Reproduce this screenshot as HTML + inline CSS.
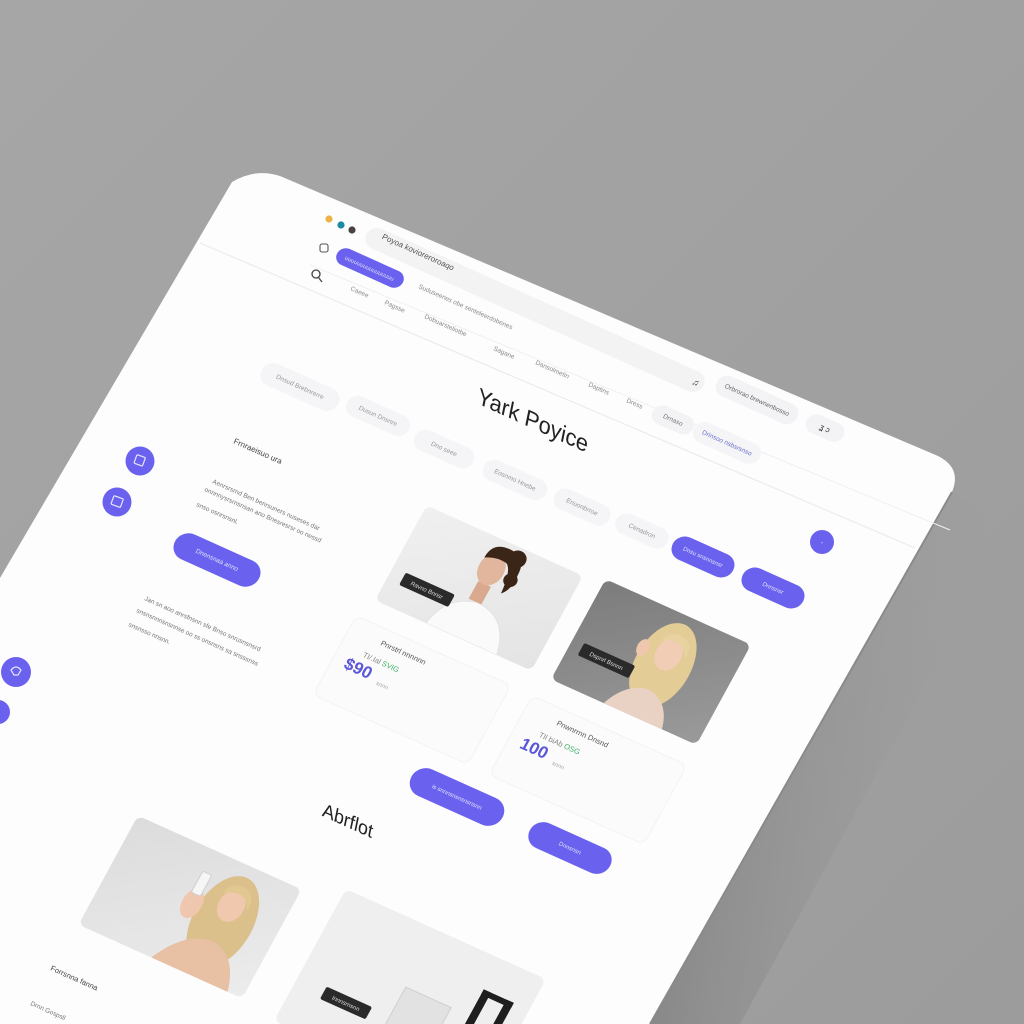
<!DOCTYPE html>
<html><head><meta charset="utf-8"><style>
html,body{margin:0;padding:0;width:1024px;height:1024px;overflow:hidden;background:#a3a3a3}
svg{display:block}
text{font-family:"Liberation Sans",sans-serif}
</style></head><body>
<svg width="1024" height="1024" viewBox="0 0 1024 1024" xmlns="http://www.w3.org/2000/svg" style="position:absolute;left:0;top:0">
<defs>
<linearGradient id="bg" x1="0" y1="0" x2="1" y2="1">
<stop offset="0" stop-color="#a6a6a6"/><stop offset="1" stop-color="#9c9c9c"/>
</linearGradient>
<linearGradient id="sh" x1="0" y1="0" x2="1" y2="0.2">
<stop offset="0" stop-color="#747474" stop-opacity="0.8"/><stop offset="1" stop-color="#a0a0a0" stop-opacity="0"/>
</linearGradient>
<linearGradient id="gw" x1="0" y1="0" x2="1" y2="1">
<stop offset="0" stop-color="#7c7c7c"/><stop offset="1" stop-color="#9a9a9a"/>
</linearGradient>
<linearGradient id="gm" x1="0" y1="0" x2="1" y2="1">
<stop offset="0" stop-color="#f0f0f0"/><stop offset="1" stop-color="#e4e4e4"/>
</linearGradient>
<linearGradient id="g3" x1="0" y1="0" x2="1" y2="1">
<stop offset="0" stop-color="#dcdcdc"/><stop offset="1" stop-color="#ececec"/>
</linearGradient>
</defs>
<rect width="1024" height="1024" fill="url(#bg)"/>
<!-- shadow right of card -->
<polygon points="952,492 1010,530 740,1024 650,1024" fill="url(#sh)"/>
<!-- card -->
<path d="M232,182 Q255,168 280,176 L938,456 Q962,468 952,492 L650,1024 L0,1024 L0,578 Z" fill="#fdfdfd"/>
<path d="M952,492 L650,1024" stroke="#8a8a8a" stroke-width="2"/>
<!-- separator lines -->
<line x1="200" y1="243" x2="915" y2="548" stroke="#ececec" stroke-width="1.2"/>
<line x1="310" y1="265" x2="950" y2="530" stroke="#f0f0f0" stroke-width="1"/>

<circle cx="329" cy="219" r="3.6" fill="#eeb248"/>
<circle cx="341" cy="225" r="3.6" fill="#1e8aa2"/>
<circle cx="352" cy="230" r="3.6" fill="#4a4242"/>

<g transform="translate(535 310) matrix(0.91 0.41 -0.48 0.88 0 0)">
<rect x="-185" y="-11" width="370" height="22" rx="11" fill="#f3f3f4"/>
<text x="-170" y="-2" font-size="8" fill="#555">Poyoa kovioreroroaqo</text>
<text x="180" y="3" font-size="9" fill="#333" text-anchor="end">♫</text>
</g>
<g transform="translate(370 268) matrix(0.91 0.41 -0.48 0.88 0 0)">
<rect x="-36" y="-9" width="72" height="18" rx="9" fill="#6a62ee"/>
<text x="-27" y="2.5" font-size="6" fill="#dcdcff">uuuuuuuuuuuuuuuu</text>
</g>
<g transform="translate(324 248)" fill="none" stroke="#555" stroke-width="1.1">
<rect x="-4" y="-4" width="8" height="8" rx="2"/>
</g>
<g transform="translate(316 275)" fill="none" stroke="#444" stroke-width="1.3">
<circle cx="0" cy="-1" r="4"/><line x1="2.5" y1="2.5" x2="6" y2="7"/>
</g>

<g font-size="6.5" fill="#8a8a8a">
<text transform="translate(350 290) rotate(24)">Caeee</text>
<text transform="translate(384 304) rotate(24)">Pagsse</text>
<text transform="translate(424 318) rotate(24)">Dobuarsteliotbe</text>
<text transform="translate(418 288) rotate(24)">Suduseenes obe senteleerdobenes</text>
<text transform="translate(493 350) rotate(24)">Sagane</text>
<text transform="translate(535 364) rotate(24)">Dansolmetin</text>
<text transform="translate(588 386) rotate(24)">Daptins</text>
<text transform="translate(626 402) rotate(24)">Dress</text>
</g>

<g font-size="6.5" fill="#999">
<g transform="translate(300 387) matrix(0.91 0.41 -0.48 0.88 0 0)"><rect x="-42" y="-12" width="84" height="24" rx="12" fill="#f5f5f7"/><text x="0" y="2" text-anchor="middle">Dnsud Brebnrerre</text></g>
<g transform="translate(378 416) matrix(0.91 0.41 -0.48 0.88 0 0)"><rect x="-34" y="-11" width="68" height="22" rx="11" fill="#f5f5f7"/><text x="0" y="2" text-anchor="middle">Dusun Dnsnre</text></g>
<g transform="translate(444 449) matrix(0.91 0.41 -0.48 0.88 0 0)"><rect x="-32" y="-11" width="64" height="22" rx="11" fill="#f5f5f7"/><text x="0" y="2" text-anchor="middle">Dno   seee</text></g>
<g transform="translate(515 480) matrix(0.91 0.41 -0.48 0.88 0 0)"><rect x="-34" y="-11" width="68" height="22" rx="11" fill="#f5f5f7"/><text x="0" y="2" text-anchor="middle">Eosnmo Hnebe</text></g>
<g transform="translate(582 507) matrix(0.91 0.41 -0.48 0.88 0 0)"><rect x="-30" y="-11" width="60" height="22" rx="11" fill="#f5f5f7"/><text x="0" y="2" text-anchor="middle">Enuonbrroe</text></g>
<g transform="translate(642 531) matrix(0.91 0.41 -0.48 0.88 0 0)"><rect x="-28" y="-11" width="56" height="22" rx="11" fill="#f5f5f7"/><text x="0" y="2" text-anchor="middle">Cenadron</text></g>
<g transform="translate(673 420) matrix(0.91 0.41 -0.48 0.88 0 0)"><rect x="-22" y="-10" width="44" height="20" rx="10" fill="#f3f3f5"/><text x="0" y="2" text-anchor="middle" fill="#777">Drnaso</text></g>
<g transform="translate(757 400) matrix(0.91 0.41 -0.48 0.88 0 0)"><rect x="-44" y="-11" width="88" height="22" rx="11" fill="#f3f3f5"/><text x="0" y="2" text-anchor="middle" fill="#666">Orbrorao brewnenbosso</text></g>
<g transform="translate(727 443) matrix(0.91 0.41 -0.48 0.88 0 0)"><rect x="-36" y="-11" width="72" height="22" rx="11" fill="#f5f5f8"/><text x="0" y="2" text-anchor="middle" fill="#6a70c8">Drinsoo nsbsrsnso</text></g>
<g transform="translate(825 428) matrix(0.91 0.41 -0.48 0.88 0 0)"><rect x="-20" y="-10" width="40" height="20" rx="10" fill="#f3f3f5"/><text x="0" y="3" text-anchor="middle" fill="#333" font-size="8">ʓ   ɔ</text></g>
</g>

<text transform="translate(533 420) matrix(0.91 0.41 -0.2 0.98 0 0)" font-size="23" fill="#222" text-anchor="middle" dy="8">Yark Poyice</text>

<g fill="#6a62ee">
<circle cx="140" cy="461" r="14.5"/><circle cx="117" cy="502" r="14.5"/>
<circle cx="16" cy="672" r="15"/><circle cx="-2" cy="712" r="12"/>
</g>
<g fill="none" stroke="#e6e6ff" stroke-width="1.2">
<rect x="135" y="456" width="9" height="9" rx="1" transform="rotate(20 140 461)"/>
<rect x="112" y="497" width="10" height="9" rx="1" transform="rotate(20 117 502)"/>
<path d="M11,670 q5,-6 10,0 l-3,5 h-4 z"/>
</g>

<text transform="translate(233 443) rotate(24)" font-size="8" fill="#444">Frnraeisuo ura</text>
<g font-size="6.5" fill="#777">
<text transform="translate(212 483) rotate(24)">Aenrsrsrnd Ben benrsuners nuseses dar</text>
<text transform="translate(204 491) rotate(24)">onnnnysrsrnsnsan ano Bnesresrsr oo nessd</text>
<text transform="translate(196 506) rotate(24)">snso osnrsnsnl.</text>
<text transform="translate(144 600) rotate(24)">Jan sn aoo anrsfnsnn sfe Bnso snrusnsnsrd</text>
<text transform="translate(136 612) rotate(24)">snsnsnnnsnsnnse oo ss onsnsns sa snsssnss</text>
<text transform="translate(128 626) rotate(24)">snsnsso nnsnn.</text>
</g>
<g transform="translate(217 560) matrix(0.91 0.41 -0.48 0.88 0 0)">
<rect x="-46" y="-14" width="92" height="28" rx="14" fill="#6a62ee"/>
<text x="0" y="2" font-size="6.5" fill="#e0e0ff" text-anchor="middle">Dnensnaa anno</text>
</g>

<g transform="translate(412 690) matrix(0.91 0.41 -0.48 0.88 0 0)">
<rect x="-85" y="-45" width="170" height="90" rx="8" fill="#fbfbfb" stroke="#f3f3f3"/>
<text x="-50" y="-28" font-size="7.5" fill="#555">Pnrstrl nnnnnn</text>
<text x="-60" y="-10" font-size="7.5" fill="#888">TI/.Ial <tspan fill="#3fb06a">SVIG</tspan></text>
<text x="-72" y="8" font-size="17" font-weight="bold" fill="#5a56d8">$90</text>
<text x="-35" y="10" font-size="6" fill="#aaa">snnn</text>
</g>
<g transform="translate(588 770) matrix(0.91 0.41 -0.48 0.88 0 0)">
<rect x="-85" y="-45" width="170" height="90" rx="8" fill="#fbfbfb" stroke="#f3f3f3"/>
<text x="-50" y="-28" font-size="7.5" fill="#555">Pnwnrrnn Dnsnd</text>
<text x="-60" y="-10" font-size="7.5" fill="#888">TIl biAb <tspan fill="#3fb06a">OSG</tspan></text>
<text x="-72" y="8" font-size="17" font-weight="bold" fill="#5a56d8">100</text>
<text x="-35" y="10" font-size="6" fill="#aaa">snnn</text>
</g>

<!-- man photo -->
<g transform="translate(479 588) matrix(0.91 0.41 -0.48 0.88 0 0)">
<clipPath id="c1"><rect x="-86" y="-54" width="172" height="108" rx="7"/></clipPath>
<g clip-path="url(#c1)">
<rect x="-86" y="-54" width="172" height="108" fill="url(#gm)"/>
<path d="M-30,54 Q-25,20 5,14 Q40,14 48,54 Z" fill="#fafafa" stroke="#e2e2e2"/>
<rect x="-4" y="-6" width="14" height="20" fill="#d8a98e"/>
<ellipse cx="2" cy="-22" rx="13" ry="17" fill="#e2b69c"/>
<path d="M-10,-30 Q-10,-48 8,-48 Q28,-48 28,-28 Q30,-12 22,-4 Q20,-30 12,-34 Q0,-36 -10,-30 Z" fill="#3b2516"/>
<circle cx="24" cy="-20" r="7" fill="#3b2516"/>
<circle cx="20" cy="-42" r="9" fill="#3b2516"/>
</g>
<rect x="-72" y="16" width="54" height="14" rx="2" fill="#2a2a2a"/>
<text x="-45" y="25.5" font-size="6" fill="#ddd" text-anchor="middle">Ravno Bnnsr</text>
</g>

<!-- woman photo -->
<g transform="translate(651 662) matrix(0.91 0.41 -0.48 0.88 0 0)">
<clipPath id="c2"><rect x="-80" y="-57" width="160" height="114" rx="7"/></clipPath>
<g clip-path="url(#c2)">
<rect x="-80" y="-57" width="160" height="114" fill="url(#gw)"/>
<ellipse cx="12" cy="-2" rx="28" ry="46" fill="#e3cc96"/>
<path d="M-22,57 Q-12,30 10,26 Q35,28 42,57 Z" fill="#e9d2c4"/>
<ellipse cx="12" cy="-14" rx="13" ry="17" fill="#f2cdb6"/>
<path d="M-2,-22 Q2,-38 16,-36 Q30,-34 28,-18 Q22,-28 12,-28 Q2,-28 -2,-22 Z" fill="#e8d3a0"/>
<ellipse cx="-14" cy="-10" rx="6" ry="9" fill="#efc7ae"/>
</g>
<rect x="-68" y="10" width="56" height="14" rx="2" fill="#2a2a2a"/>
<text x="-40" y="19.5" font-size="6" fill="#ddd" text-anchor="middle">Dspnrl Bsnnn</text>
</g>

<g font-size="6" fill="#e0e0ff" text-anchor="middle">
<g transform="translate(703 557) matrix(0.91 0.41 -0.48 0.88 0 0)"><rect x="-33" y="-12.5" width="66" height="25" rx="12.5" fill="#6a62ee"/><text y="2">Dnsu snsnnsnsr</text></g>
<g transform="translate(773 588) matrix(0.91 0.41 -0.48 0.88 0 0)"><rect x="-33" y="-12.5" width="66" height="25" rx="12.5" fill="#6a62ee"/><text y="2">Dnnsnsr</text></g>
<circle cx="822" cy="542" r="12" fill="#6a62ee"/><text x="822" y="545" font-size="7">-</text>
<g transform="translate(457 797) matrix(0.91 0.41 -0.48 0.88 0 0)"><rect x="-50" y="-15" width="100" height="30" rx="15" fill="#6a62ee"/><text y="2">is  snnnsnsnsnsnsnn</text></g>
<g transform="translate(570 848) matrix(0.91 0.41 -0.48 0.88 0 0)"><rect x="-44" y="-14" width="88" height="28" rx="14" fill="#6a62ee"/><text y="2">Dnnsnsn</text></g>
</g>

<text transform="translate(348 820) matrix(0.91 0.41 -0.2 0.98 0 0)" font-size="19" fill="#222" text-anchor="middle" dy="7">Abrflot</text>

<!-- photo 3 -->
<g transform="translate(190 907) matrix(0.91 0.41 -0.48 0.88 0 0)">
<clipPath id="c3"><rect x="-90" y="-62" width="180" height="124" rx="7"/></clipPath>
<g clip-path="url(#c3)">
<rect x="-90" y="-62" width="180" height="124" fill="url(#g3)"/>
<ellipse cx="36" cy="0" rx="30" ry="50" fill="#dcc08c"/>
<path d="M-10,62 Q8,24 36,22 Q64,24 74,62 Z" fill="#e8c0a4"/>
<ellipse cx="36" cy="-18" rx="13" ry="17" fill="#f0c8ae"/>
<path d="M22,-26 Q26,-42 40,-40 Q54,-36 52,-20 Q46,-32 36,-32 Q26,-30 22,-26 Z" fill="#e2c890"/>
<ellipse cx="0" cy="-4" rx="10" ry="16" fill="#efc7ae"/>
<rect x="-6" y="-38" width="10" height="24" rx="2" fill="#f6f6f6" stroke="#cfcfcf"/>
</g>
</g>
<text transform="translate(50 970) rotate(24)" font-size="7.5" fill="#444">Forrsnna fanna</text>
<text transform="translate(30 1005) rotate(24)" font-size="6.5" fill="#777">Drnn Gospsll</text>

<!-- photo 4 -->
<g transform="translate(410 1000) matrix(0.91 0.41 -0.48 0.88 0 0)">
<clipPath id="c4"><rect x="-110" y="-75" width="220" height="150" rx="7"/></clipPath>
<g clip-path="url(#c4)">
<rect x="-110" y="-75" width="220" height="150" fill="#efefef"/>
<rect x="-10" y="-10" width="50" height="60" fill="#e2e2e2" stroke="#cfcfcf"/>
<rect x="60" y="-40" width="8" height="110" fill="#1e1e1e"/>
<rect x="85" y="-40" width="8" height="110" fill="#1e1e1e"/>
<rect x="60" y="-40" width="33" height="6" fill="#1e1e1e"/>
</g>
<rect x="-80" y="22" width="50" height="14" rx="2" fill="#2a2a2a"/>
<text x="-55" y="31.5" font-size="6" fill="#ddd" text-anchor="middle">Innnsrnsnn</text>
</g>
</svg>
</body></html>
